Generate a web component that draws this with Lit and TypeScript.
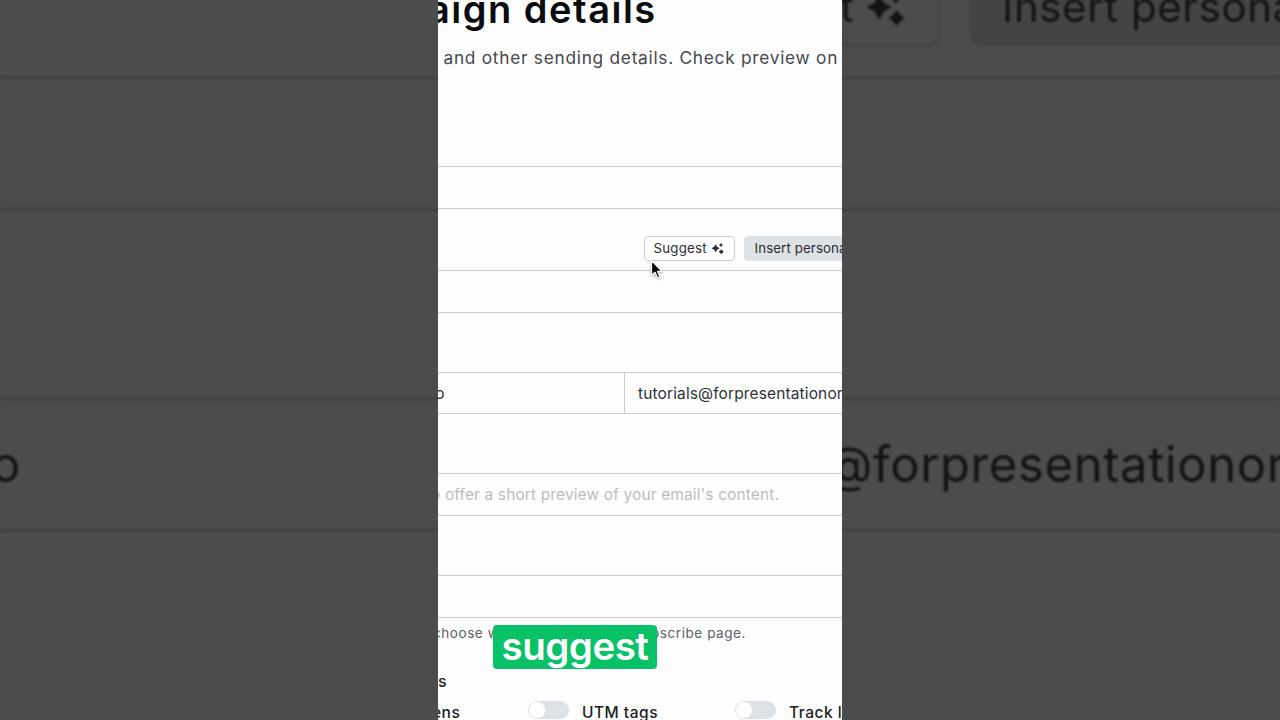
import { LitElement, html, css } from 'lit';
import { customElement } from 'lit/decorators.js';

/**
 * Small off-state switch used in the tracking options row.
 *
 * @element option-toggle
 */
@customElement('option-toggle')
export class OptionToggle extends LitElement {
  static styles = css`
    :host {
      display: block;
      flex: none;
    }

    .track {
      box-sizing: border-box;
      width: 41px;
      height: 18px;
      padding: 1px;
      border-radius: 9px;
      background: #dee1e5;
    }

    .thumb {
      width: 16px;
      height: 16px;
      border-radius: 50%;
      background: #fff;
    }
  `;

  render() {
    return html`<div class="track"><div class="thumb"></div></div>`;
  }
}

/**
 * Three-star sparkle icon, sized by its host.
 *
 * @element sparkle-icon
 */
@customElement('sparkle-icon')
export class SparkleIcon extends LitElement {
  static styles = css`
    :host {
      display: block;
      flex: none;
    }

    svg {
      display: block;
      width: 100%;
      height: 100%;
    }
  `;

  render() {
    return html`
      <svg viewBox="0 0 24 24" fill="currentColor">
        <path d="M8.5 4L11.3 8.9L16 11.5L11.3 14.1L8.5 19L5.7 14.1L1 11.5L5.7 8.9Z"/>
        <path d="M18.5 1.5L20 4L22.5 5.5L20 7L18.5 9.5L17 7L14.5 5.5L17 4Z"/>
        <path d="M19 13.3L21.1 15.9L23.7 18L21.1 20.1L19 22.7L16.9 20.1L14.3 18L16.9 15.9Z"/>
      </svg>
    `;
  }
}

/**
 * Campaign details form, framed by dimmed enlargements on both sides.
 *
 * @element app-root
 */
@customElement('app-root')
export class AppRoot extends LitElement {
  static styles = css`
    :host {
      display: grid;
      grid-template-columns: 438px 404px 438px;
      position: relative;
      width: 1280px;
      height: 720px;
      overflow: hidden;
      background: #4c4c4c;
      font-family: Inter, 'Liberation Sans', sans-serif;
      color: #303236;
      white-space: nowrap;
    }

    .side,
    .main {
      height: 720px;
      overflow: hidden;
    }

    .main {
      background: #fdfdfd;
    }

    .header {
      height: 166px;
    }

    .title {
      margin: 0 0 0 -10px;
      font-size: 38px;
      font-weight: 600;
      line-height: 18px;
      letter-spacing: 1.5px;
      color: #0b0c0d;
    }

    .intro {
      margin: 27px 0 0 5.5px;
      font-size: 17.3px;
      line-height: 26px;
      letter-spacing: 0.73px;
      color: #46474a;
    }

    .field {
      box-sizing: border-box;
      display: flex;
      align-items: center;
      height: 43px;
      border-top: 1px solid #cbcccd;
      border-bottom: 1px solid #cbcccd;
      font-size: 16px;
    }

    .field.sender {
      height: 42px;
    }

    .gap {
      height: 59px;
    }

    .gap.actions {
      box-sizing: border-box;
      display: flex;
      gap: 9px;
      height: 61px;
      padding: 27px 0 0 206px;
    }

    .button {
      box-sizing: border-box;
      display: flex;
      flex: none;
      align-items: center;
      height: 25px;
      padding-bottom: 1px;
      border: 1px solid #cdcfd2;
      border-radius: 4px;
      font-size: 13.3px;
      letter-spacing: 0.2px;
      color: #2c2e32;
    }

    .button.suggest {
      width: 91px;
      padding-left: 8.5px;
      gap: 4px;
      background: #fff;
    }

    .button.suggest sparkle-icon {
      width: 13px;
      height: 13px;
    }

    .button.insert {
      width: 180px;
      padding-left: 9.5px;
      border-color: #dee1e5;
      background: #dee1e5;
      letter-spacing: 0.1px;
    }

    .name {
      box-sizing: border-box;
      flex: none;
      width: 187px;
      height: 100%;
      margin-right: 13px;
      border-right: 1px solid #cbcccd;
      line-height: 40px;
    }

    .name span {
      margin-left: -3px;
    }

    .email {
      font-size: 15.5px;
      letter-spacing: 0.13px;
    }

    .placeholder {
      margin-left: -7px;
      font-size: 15.5px;
      letter-spacing: 0.12px;
      color: #bcbdbf;
    }

    .note {
      margin: 5px 0 0 -5px;
      font-size: 13.5px;
      line-height: 20px;
      letter-spacing: 0.57px;
      color: #606164;
    }

    .section {
      margin: 28px 0 0 0;
      font-size: 16px;
      font-weight: 500;
      line-height: 20px;
      color: #1b1c1e;
    }

    .options {
      display: grid;
      grid-template-columns: 90px 207px 207px;
      margin-top: 10px;
      font-size: 15.5px;
      font-weight: 500;
      line-height: 24px;
      letter-spacing: 0.5px;
      color: #1b1c1e;
    }

    .option {
      display: flex;
      gap: 13px;
    }

    .option .cut {
      margin-left: -6px;
    }

    .caption {
      position: absolute;
      left: 493px;
      top: 625px;
      box-sizing: border-box;
      width: 164px;
      height: 44px;
      border-radius: 4px;
      background: #09c167;
      color: #fff;
      font-size: 38.5px;
      font-weight: 600;
      line-height: 43px;
      letter-spacing: -0.5px;
      text-align: center;
    }

    .cursor {
      position: absolute;
      left: 648px;
      top: 258px;
      width: 16px;
      height: 24px;
      filter: drop-shadow(0 1px 1px rgba(0, 0, 0, 0.35));
    }

    .zoomed {
      height: 720px;
      filter: blur(0.8px);
      color: #121314;
    }

    .zoomed .top {
      box-sizing: border-box;
      display: flex;
      align-items: flex-start;
      gap: 30px;
      height: 76px;
    }

    .zoomed .row {
      box-sizing: border-box;
      display: flex;
      align-items: center;
      height: 135px;
      border-top: 3px solid #404040;
      border-bottom: 3px solid #404040;
      font-size: 49px;
      letter-spacing: 0.6px;
    }

    .zoomed .space {
      height: 186px;
    }

    .zoomed .row .tail {
      margin-left: -9px;
    }

    .zoomed .row .address {
      margin-left: -17px;
    }

    .big {
      box-sizing: border-box;
      display: flex;
      flex: none;
      height: 46px;
      font-size: 42px;
      line-height: 14px;
      letter-spacing: 0.6px;
    }

    .big.suggest {
      width: 102px;
      margin-left: -4px;
      border: 2px solid #414141;
      border-top: 0;
      border-radius: 0 0 12px 12px;
      gap: 11px;
    }

    .big.suggest sparkle-icon {
      width: 40px;
      height: 40px;
      margin-top: -12px;
    }

    .big.insert {
      width: 340px;
      padding-left: 32px;
      border-radius: 0 0 12px 12px;
      background: #434446;
    }
  `;

  private renderSide(top: unknown, value: unknown) {
    return html`
      <div class="side">
        <div class="zoomed">
          <div class="top">${top}</div>
          <div class="row"></div>
          <div class="space"></div>
          <div class="row">${value}</div>
        </div>
      </div>
    `;
  }

  private renderMain() {
    return html`
      <div class="main">
        <div class="header">
          <h1 class="title">aign details</h1>
          <p class="intro">and other sending details. Check preview on</p>
        </div>
        <div class="field"></div>
        <div class="gap actions">
          <div class="button suggest">Suggest <sparkle-icon></sparkle-icon></div>
          <div class="button insert">Insert persona</div>
        </div>
        <div class="field"></div>
        <div class="gap"></div>
        <div class="field sender">
          <div class="name"><span>o</span></div>
          <span class="email">tutorials@forpresentationor</span>
        </div>
        <div class="gap"></div>
        <div class="field"><span class="placeholder">o offer a short preview of your email's content.</span></div>
        <div class="gap"></div>
        <div class="field"></div>
        <p class="note">choose which they see on unsubscribe page.</p>
        <div class="section">s</div>
        <div class="options">
          <div class="option"><span class="cut">ens</span></div>
          <div class="option"><option-toggle></option-toggle>UTM tags</div>
          <div class="option"><option-toggle></option-toggle>Track l</div>
        </div>
      </div>
    `;
  }

  render() {
    return html`
      ${this.renderSide('', html`<span class="tail">o</span>`)}
      ${this.renderMain()}
      ${this.renderSide(
        html`
          <div class="big suggest">t <sparkle-icon></sparkle-icon></div>
          <div class="big insert">Insert persona</div>
        `,
        html`<span class="address">@forpresentationor</span>`
      )}
      <svg class="cursor" viewBox="0 0 16 24">
        <path d="M3.5 2.5V17.5L7 14.3L9.6 20L12 18.9L9.5 13.4H14Z" fill="#0a0a0a" stroke="#fff" stroke-width="1.2" stroke-linejoin="round"/>
      </svg>
      <div class="caption">suggest</div>
    `;
  }
}

declare global {
  interface HTMLElementTagNameMap {
    'option-toggle': OptionToggle;
    'sparkle-icon': SparkleIcon;
    'app-root': AppRoot;
  }
}
